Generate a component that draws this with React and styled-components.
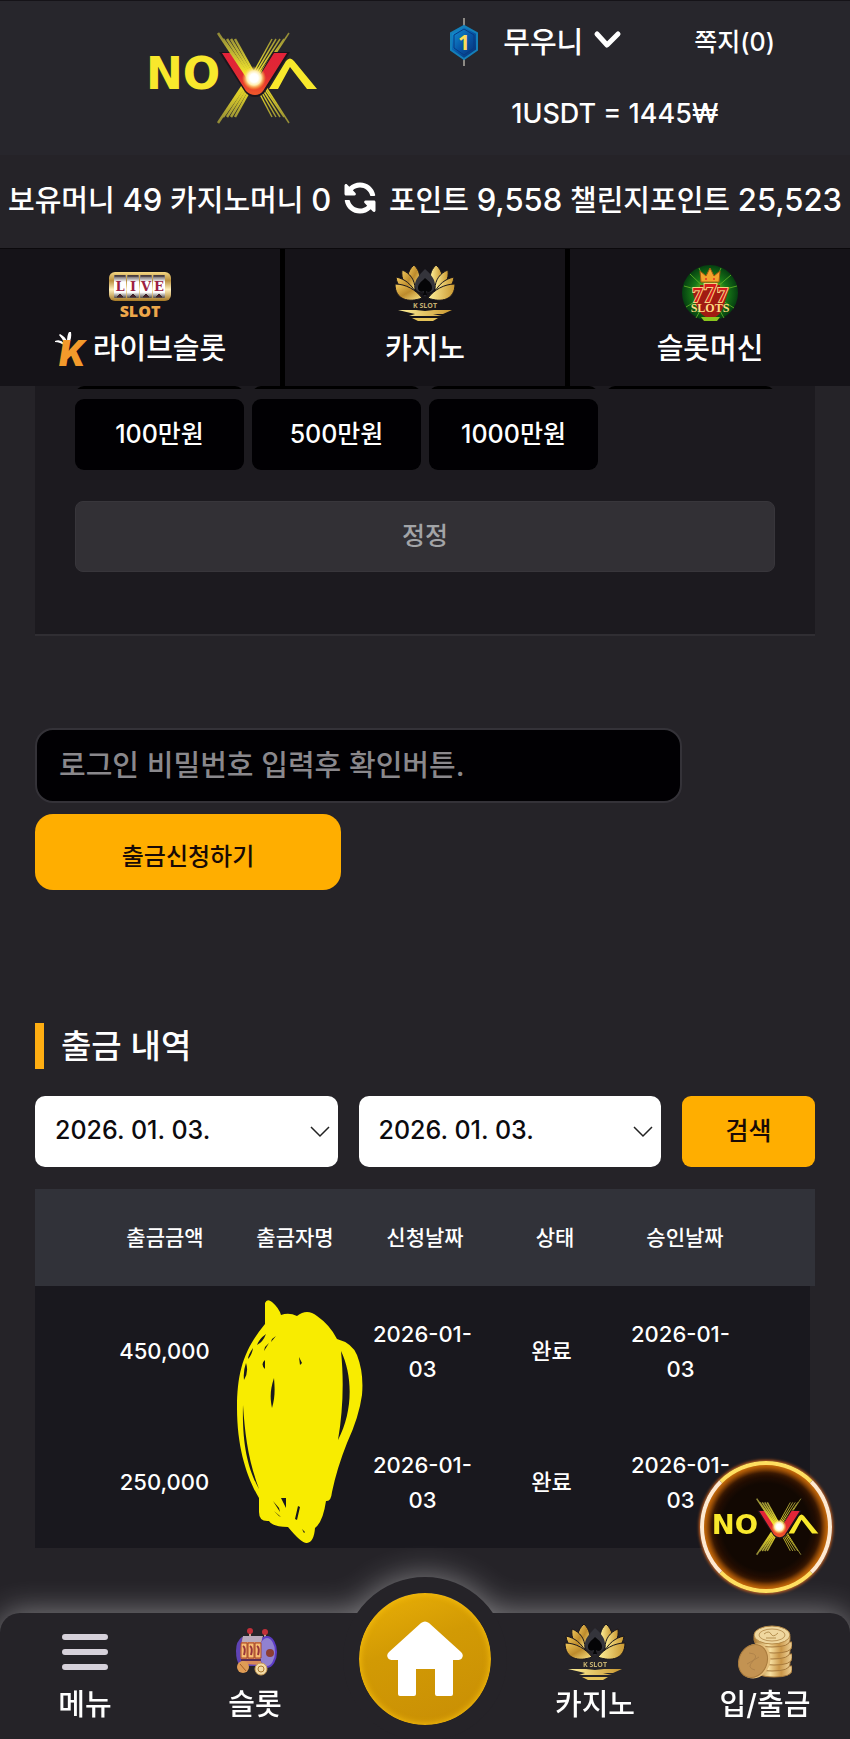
import React from 'react';
import styled, { createGlobalStyle } from 'styled-components';
import { FaSyncAlt } from 'react-icons/fa';

const GlobalStyle = createGlobalStyle`
  * { box-sizing: border-box; }
  body {
    margin: 0;
    background: #252328;
    color: #fff;
    font-family: Inter, "Noto Sans CJK KR", sans-serif;
    font-weight: 500;
  }
  button, input, select { font: inherit; }
  a { color: inherit; text-decoration: none; }
`;

const amounts = ['100만원', '500만원', '1000만원'];
const columns = ['출금금액', '출금자명', '신청날짜', '상태', '승인날짜'];
const withdrawals = [
  { amount: '450,000', status: '완료' },
  { amount: '250,000', status: '완료' },
];

const rays = [0, 5, 9, 13, 17];

const NovaLogo = ({ width }) => (
  <svg width={width} viewBox="0 0 170 92" role="img" aria-label="NOVA">
    <defs>
      <linearGradient id="novaRay" x1="0" y1="0" x2="0" y2="92" gradientUnits="userSpaceOnUse">
        <stop offset="0" stopColor="#8d8638" />
        <stop offset="0.45" stopColor="#f3e62c" />
        <stop offset="0.7" stopColor="#d8ca2a" />
        <stop offset="1" stopColor="#8d8638" />
      </linearGradient>
      <linearGradient id="novaRed" x1="0" y1="18" x2="0" y2="62" gradientUnits="userSpaceOnUse">
        <stop offset="0" stopColor="#e3213a" />
        <stop offset="0.6" stopColor="#e02a32" />
        <stop offset="1" stopColor="#f0562a" />
      </linearGradient>
      <radialGradient id="novaStar">
        <stop offset="0.35" stopColor="#fff" />
        <stop offset="0.6" stopColor="#ffeeb0" />
        <stop offset="1" stopColor="#ffd21f" stopOpacity="0" />
      </radialGradient>
    </defs>
    <text x="-2" y="57" fontFamily="DejaVu Sans" fontWeight="700" fontSize="44" fill="#f8e82c">NO</text>
    <path d="M121 57 138 29q4-5 8 0l23 28h-10L142 35 130 57z" fill="#f8e82c" />
    <g stroke="url(#novaRay)">
      {rays.map((r) => (
        <g key={r}>
          <path d={`M${141 - r} ${r ? 7 : 1}L${110 - r / 2} 48`} strokeWidth="1.5" />
          <path d={`M${141 - r} ${r ? 85 : 91}L${112 - r / 2} 46`} strokeWidth="1.5" />
          <path d={`M${70 + r} ${r ? 85 : 91}L${100 + r / 2} 46`} strokeWidth="2.5" />
        </g>
      ))}
    </g>
    <path d="M71 20h16l19 32 19-32h17l-25 40q-4 5-10 5t-10-5z" fill="#1c151c" />
    <path d="M74 21h12l20 32 20-32h13l-24 38q-3 4-8 4t-9-4z" fill="url(#novaRed)" />
    <g stroke="url(#novaRay)" strokeWidth="2.5">
      {rays.map((r) => (
        <path key={r} d={`M${70 + r} ${r ? 7 : 1}L${100 + r / 2} 46`} />
      ))}
    </g>
    <circle cx="106" cy="46" r="12" fill="url(#novaStar)" />
  </svg>
);

const LevelIcon = () => (
  <svg width="30" height="48" viewBox="0 0 30 48">
    <defs>
      <linearGradient id="lvl" x1="0" y1="0" x2="1" y2="1">
        <stop offset="0" stopColor="#169ddc" />
        <stop offset="0.5" stopColor="#0757a8" />
        <stop offset="1" stopColor="#082a6c" />
      </linearGradient>
    </defs>
    <path d="M15 0v8M15 40v8" stroke="#8d8a85" strokeWidth="2" />
    <path d="M15 8 28 15v17l-13 9L2 32V15z" fill="url(#lvl)" stroke="#147fb9" strokeWidth="2" />
    <path d="M15 11 25 17v13l-10 7-10-7V17z" fill="none" stroke="#063a84" strokeWidth="1" />
    <text x="15" y="32" textAnchor="middle" fontFamily="Open Sans" fontWeight="700" fontSize="21" fill="#fbdc58">1</text>
  </svg>
);

const ChevronIcon = () => (
  <svg width="29" height="22" viewBox="0 0 29 22">
    <path d="M4 5l10 11L25 5" fill="none" stroke="#fff" strokeWidth="5" strokeLinecap="round" strokeLinejoin="round" />
  </svg>
);

const LiveSlotIcon = () => (
  <svg width="64" height="58" viewBox="0 0 64 58">
    <defs>
      <linearGradient id="frame" x1="0" y1="0" x2="0" y2="1">
        <stop offset="0" stopColor="#f5d783" />
        <stop offset="0.3" stopColor="#b9903f" />
        <stop offset="0.6" stopColor="#fff0bc" />
        <stop offset="1" stopColor="#a67824" />
      </linearGradient>
      <linearGradient id="reel" x1="0" y1="0" x2="0" y2="1">
        <stop offset="0" stopColor="#4b4344" />
        <stop offset="0.3" stopColor="#fff" />
        <stop offset="0.75" stopColor="#fff" />
        <stop offset="1" stopColor="#514a48" />
      </linearGradient>
    </defs>
    <rect x="1" y="8" width="62" height="29" rx="6" fill="url(#frame)" />
    {[6, 19, 32, 45].map((x, i) => (
      <g key={x}>
        <rect x={x} y="11" width="12" height="23" rx="1" fill="url(#reel)" />
        <path d={`M${x + 1} 12h10M${x + 3} 33l3-3 3 3z`} stroke="#38282b" strokeWidth="1" fill="#51202e" />
        <text x={x + 6} y="27" textAnchor="middle" fontFamily="DejaVu Serif" fontWeight="700" fontSize="13" fill="#9c2142">{'LIVE'[i]}</text>
      </g>
    ))}
    <text x="32" y="53" textAnchor="middle" fontFamily="Open Sans" fontWeight="800" fontSize="16" fill="#eda74a">SLOT</text>
  </svg>
);

const LotusIcon = () => (
  <svg width="62" height="58" viewBox="0 0 62 58">
    <defs>
      <linearGradient id="goldL" x1="0" y1="0" x2="1" y2="1">
        <stop offset="0" stopColor="#f2c95c" />
        <stop offset="0.5" stopColor="#bd8b2c" />
        <stop offset="1" stopColor="#ffe98a" />
      </linearGradient>
      <linearGradient id="goldR" x1="0" y1="0" x2="1" y2="0">
        <stop offset="0" stopColor="#fff19a" />
        <stop offset="1" stopColor="#c8962f" />
      </linearGradient>
    </defs>
    <g fill="url(#goldL)" stroke="#17141a" strokeWidth="1">
      <path d="M20 1c-7 6-8 14-3 24l7-5c3-7 2-13-4-19z" />
      <path d="M8 6c-1 9 2 15 11 22l2-3C21 16 16 9 8 6z" />
      <path d="M2 13c1 9 6 14 19 20l1-4C17 20 11 15 2 13z" />
      <path d="M1 20c0 16 14 19 27 14C22 26 12 20 1 20z" />
    </g>
    <g fill="url(#goldR)" stroke="#17141a" strokeWidth="1">
      <path d="M42 1c7 6 8 14 3 24l-7-5c-3-7-2-13 4-19z" />
      <path d="M54 6c1 9-2 15-11 22l-2-3c0-9 5-16 13-19z" />
      <path d="M60 13c-1 9-6 14-19 20l-1-4c5-9 11-14 20-16z" />
      <path d="M61 20c0 16-14 19-27 14 6-8 16-14 27-14z" />
    </g>
    <path d="M31 5c7 6 10 11 10 16 0 6-4 8-8 7l-2 5-2-5c-5 1-8-2-8-7 0-5 4-10 10-16z" fill="#34343b" />
    <path d="M31 14c5 4 7 6 7 10s-4 5-6 3l1 4h-4l1-4c-3 2-6 0-6-3 0-4 3-6 7-10z" fill="#050507" />
    <text x="31" y="44" textAnchor="middle" fontFamily="Open Sans" fontWeight="700" fontSize="7" fill="#c5b071">K SLOT</text>
    <path d="M4 46h18l9 1 9-1h18l-9 4H39l9 2H15l6-2z" fill="url(#goldR)" />
    <path d="M18 54h26l-5 3H24z" fill="#e4c259" />
  </svg>
);

const SlotsIcon = () => (
  <svg width="58" height="58" viewBox="0 0 58 58">
    <defs>
      <radialGradient id="green">
        <stop offset="0.2" stopColor="#88c51c" />
        <stop offset="0.6" stopColor="#187a17" />
        <stop offset="1" stopColor="#053f10" />
      </radialGradient>
    </defs>
    <circle cx="29" cy="29" r="28" fill="url(#green)" />
    <g stroke="#67b928" strokeWidth="1" opacity="0.8">
      <path d="M29 29 9 10M29 29 3 22M29 29 50 11M29 29 56 22M29 29 5 43M29 29 53 44M29 29 15 54M29 29 43 54M29 29 18 4M29 29 40 4" />
    </g>
    <path d="M20 18 19 7l6 5 4-8 4 8 6-5-1 11z" fill="#f3a32b" stroke="#a95810" />
    <circle cx="25" cy="15" r="1" fill="#e93124" />
    <circle cx="33" cy="15" r="1" fill="#e93124" />
    <path d="M11 24h8v-3h20v3h9l-4 14q-5 17-15 16T14 38z" fill="#a11b12" />
    <text x="29" y="38" textAnchor="middle" fontFamily="Liberation Serif" fontWeight="700" fontSize="22" fill="#d51a1c" stroke="#f6d27e" strokeWidth="2" paintOrder="stroke">
      7<tspan fontSize="28">7</tspan>7
    </text>
    <text x="29" y="48" textAnchor="middle" fontFamily="Liberation Serif" fontWeight="700" fontSize="12" fill="#ffdb83">SLOTS</text>
    <path d="M20 53h19l-3 4H23z" fill="#8ac51d" />
  </svg>
);

const CrownKIcon = () => (
  <svg width="36" height="38" viewBox="0 0 36 38">
    <path d="M1 11q5-2 9 2-2-5-5-8l1-1q6 3 7 8 0-7 2-10l2 0q1 6-2 11-2 2-4 3-5-4-10-4z" fill="#fff" />
    <text x="5" y="36" fontFamily="Inter" fontStyle="italic" fontWeight="900" fontSize="35" fill="#f39a2b">K</text>
  </svg>
);

const MenuIcon = () => (
  <svg width="46" height="38" viewBox="0 0 46 38">
    <path d="M3 4h40M3 19h40M3 34h40" stroke="#d6d1da" strokeWidth="6" strokeLinecap="round" />
  </svg>
);

const MachineIcon = () => (
  <svg width="44" height="50" viewBox="0 0 44 50">
    <path d="M17 6v8M32 7v8" stroke="#caa08a" strokeWidth="2" />
    <circle cx="17" cy="4" r="3" fill="#c2303a" />
    <circle cx="32" cy="5" r="3" fill="#c2303a" />
    <path d="M9 10q-6 4-6 14t4 15h26V11z" fill="#5f43b4" />
    <ellipse cx="34" cy="25" rx="9" ry="15" fill="#9181d0" stroke="#5b3bc5" strokeWidth="2" />
    <path d="M10 10q-5 14-1 27l20 1q-5-12 0-26z" fill="#d98a58" />
    <path d="M10 9h20l-2 6H9z" fill="#b9aabb" />
    <path d="M8 16h6v15H8zM15 16h6v15h-6zM22 16h6v15h-6z" fill="#f8bd72" stroke="#a6462b" />
    <path d="M10 19q3 2 1 9M17 19q3 2 1 9M24 19q3 2 1 9" fill="none" stroke="#97353a" strokeWidth="2" />
    <path d="M8 33h20" stroke="#5a2c55" strokeWidth="2" />
    <circle cx="37" cy="26" r="4" fill="#8c3d34" />
    <circle cx="10" cy="40" r="6" fill="#df9c55" />
    <path d="M7 37l6 7" stroke="#a45e27" />
    <circle cx="28" cy="42" r="6" fill="#f3dba6" stroke="#c79a57" />
    <circle cx="28" cy="42" r="3" fill="none" stroke="#a9772f" />
  </svg>
);

const CoinsIcon = () => (
  <svg width="54" height="56" viewBox="0 0 54 56">
    <defs>
      <linearGradient id="coin" x1="0" y1="0" x2="1" y2="0">
        <stop offset="0" stopColor="#a97a35" />
        <stop offset="0.4" stopColor="#f7dfa0" />
        <stop offset="0.7" stopColor="#c99547" />
        <stop offset="1" stopColor="#edd096" />
      </linearGradient>
    </defs>
    {[46, 40, 34, 28, 22, 16].map((y, i) => (
      <path key={y} d={`M${i % 2 ? 16 : 18} ${y - 4}v4q0 7 18 7t18-7v-4z`} fill="url(#coin)" stroke="#a87a3c" strokeWidth="1" />
    ))}
    <ellipse cx="34" cy="11" rx="18" ry="9" fill="#efd79f" stroke="#b58a48" />
    <ellipse cx="34" cy="11" rx="13" ry="6" fill="none" stroke="#bd9658" />
    <path d="M26 10q5-4 7 0t7-1M28 14h10" fill="none" stroke="#b58f50" strokeWidth="1" />
    <ellipse cx="17" cy="37" rx="15" ry="18" transform="rotate(24 17 37)" fill="#e4bc78" />
    <ellipse cx="15" cy="37" rx="14" ry="17" transform="rotate(24 15 37)" fill="#c39352" stroke="#a87a3c" />
    <path d="M11 29q11 1 4 8t2 9M9 40l12-7" fill="none" stroke="#b0834a" strokeWidth="1" />
  </svg>
);

const HomeIcon = () => (
  <svg width="76" height="76" viewBox="0 0 76 76">
    <path d="M34 2q4-3 8 0l32 29q3 3 1 6-1 2-5 2h-4v34q0 2-2 2H50q-2 0-2-2V48H29v25q0 2-2 2H13q-2 0-2-2V39H6q-4 0-5-2-2-3 1-6z" fill="#fff" />
  </svg>
);

const Scribble = () => (
  <ScribbleSvg width="126" height="244" viewBox="0 0 126 244" aria-hidden="true">
    <path
      fill="#f8ec00"
      fillRule="evenodd"
      d="M28 3q2-5 7-1 7 6 9 13 8-3 16 1 10-8 20 0 13 9 20 23 15 4 20 16 7 18 5 40-3 22-15 48-10 25-15 49-1 10-6 9-3 21-11 27-1 14-8 15-5 1-19-16-15 0-19-6-10 1-10-9v-14C10 178 0 148 0 108c0-38 8-60 28-84V3zM104 51c3 30 2 60-3 89 15-28 15-64 3-89zM6 105c-1 40 5 64 16 84-11-30-14-54-16-84zM37 78c-4 12-4 20-2 30 3-10 3-18 2-30zM29 34q-7 5-9 11 6-3 9-11zM16 48q-5 7-5 11 4-4 5-11zM9 63q-3 8-2 17 5-8 2-17zM28 60q-5 4 0 9zM39 36l-5 6 1-3zM32 43l-5 8 1-4zM44 198h5v10zM61 206l-3 13 2 1 3-13zM36 201l7 11-1-4zM37 211l7 6-2-1zM62 57l3 6-2 2zM65 229l3 3-1 1z"
    />
  </ScribbleSvg>
);

const DateField = ({ label }) => (
  <DateWrap>
    <select aria-label={label}>
      <option>2026. 01. 03.</option>
    </select>
    <svg width="20" height="12" viewBox="0 0 20 12">
      <path d="M1 1l9 9 9-9" fill="none" stroke="#222" strokeWidth="1.5" />
    </svg>
  </DateWrap>
);

const App = () => (
  <Page>
    <GlobalStyle />
    <StickyTop>
      <Header>
        <LogoLink href="#home"><NovaLogo width="170" /></LogoLink>
        <Account>
          <UserRow>
            <LevelIcon />
            <UserButton type="button">무우니 <ChevronIcon /></UserButton>
            <MessageLink href="#messages">쪽지(0)</MessageLink>
          </UserRow>
          <Rate>1USDT = 1445₩</Rate>
        </Account>
      </Header>
      <Balances>
        <span>보유머니 <Figure>49</Figure> 카지노머니 <Figure>0</Figure></span>
        <RefreshButton type="button" aria-label="새로고침"><FaSyncAlt size={32} /></RefreshButton>
        <span>포인트 <Figure>9,558</Figure> 챌린지포인트 <Figure>25,523</Figure></span>
      </Balances>
      <Tabs>
        <Tab href="#live">
          <TabIcon><LiveSlotIcon /></TabIcon>
          <TabLabel><CrownKIcon />라이브슬롯</TabLabel>
        </Tab>
        <Tab href="#casino">
          <TabIcon><LotusIcon /></TabIcon>
          <TabLabel>카지노</TabLabel>
        </Tab>
        <Tab href="#slots">
          <TabIcon><SlotsIcon /></TabIcon>
          <TabLabel>슬롯머신</TabLabel>
        </Tab>
      </Tabs>
    </StickyTop>

    <Main>
      <Panel>
        <AmountEdge>
          <i /><i /><i /><i />
        </AmountEdge>
        <AmountGrid>
          {amounts.map((a) => <AmountButton type="button" key={a}>{a}</AmountButton>)}
        </AmountGrid>
        <ResetButton type="button">정정</ResetButton>
      </Panel>

      <Form onSubmit={(e) => e.preventDefault()}>
        <PasswordInput type="password" aria-label="로그인 비밀번호" placeholder="로그인 비밀번호 입력후 확인버튼." />
        <SubmitButton>출금신청하기</SubmitButton>
      </Form>

      <Title>출금 내역</Title>
      <Filters>
        <DateField label="시작 날짜" />
        <DateField label="종료 날짜" />
        <SearchButton type="button">검색</SearchButton>
      </Filters>

      <Table>
        <thead>
          <tr>{columns.map((c) => <th key={c}>{c}</th>)}</tr>
        </thead>
        <tbody>
          {withdrawals.map((w, i) => (
            <tr key={w.amount}>
              <td>{w.amount}</td>
              <td>{i === 0 && <Scribble />}</td>
              <td>2026-01-<wbr />03</td>
              <td>{w.status}</td>
              <td>2026-01-<wbr />03</td>
            </tr>
          ))}
        </tbody>
      </Table>
    </Main>

    <FloatingButton href="#nova"><NovaLogo width="106" /></FloatingButton>

    <BottomNav>
      <NavItem href="#menu">
        <NavIcon><MenuIcon /></NavIcon>
        메뉴
      </NavItem>
      <NavItem href="#slot">
        <NavIcon><MachineIcon /></NavIcon>
        슬롯
      </NavItem>
      <HomeSlot>
        <HomeButton href="#home" aria-label="홈"><HomeIcon /></HomeButton>
      </HomeSlot>
      <NavItem href="#casino">
        <NavIcon><LotusIcon /></NavIcon>
        카지노
      </NavItem>
      <NavItem href="#cash">
        <NavIcon><CoinsIcon /></NavIcon>
        입/출금
      </NavItem>
    </BottomNav>
  </Page>
);

const Page = styled.div`
  display: flex;
  flex-direction: column;
  min-height: 100vh;
`;

const StickyTop = styled.div`
  position: sticky;
  top: 0;
  z-index: 2;
`;

const Header = styled.header`
  display: grid;
  grid-template-columns: 11fr 10fr;
  min-height: 155px;
  background: #27262c;
  border-top: 1px solid #151318;
`;

const LogoLink = styled.a`
  display: flex;
  align-items: center;
  justify-content: center;
  padding-left: 20px;

  svg {
    overflow: visible;
  }
`;

const Account = styled.div`
  display: flex;
  flex-direction: column;
  gap: 28px;
  padding: 17px 0 0 4px;
`;

const UserRow = styled.div`
  display: flex;
  align-items: center;
  height: 48px;
`;

const UserButton = styled.button`
  display: flex;
  align-items: center;
  gap: 10px;
  margin-left: 24px;
  padding: 0 0 5px;
  border: 0;
  background: none;
  color: #fff;
  font-size: 29px;
  white-space: nowrap;
`;

const MessageLink = styled.a`
  margin-left: 72px;
  padding-bottom: 5px;
  font-size: 25px;
  white-space: nowrap;
`;

const Rate = styled.div`
  padding-left: 62px;
  font-size: 27px;
  line-height: 40px;
`;

const Balances = styled.div`
  display: flex;
  align-items: center;
  justify-content: space-between;
  min-height: 94px;
  padding: 0 8px 8px;
  background: #252328;
  border-bottom: 1px solid #0b090c;
  font-size: 29px;
  white-space: nowrap;
`;

const Figure = styled.span`
  font-size: 31px;
`;

const RefreshButton = styled.button`
  display: flex;
  padding: 0;
  border: 0;
  background: none;
  color: #fff;

  svg {
    transform: scaleX(-1);
  }
`;

const Tabs = styled.nav`
  display: grid;
  grid-template-columns: repeat(3, 1fr);
  gap: 5px;
  background: #000;
`;

const Tab = styled.a`
  display: flex;
  flex-direction: column;
  align-items: center;
  gap: 6px;
  padding: 15px 0 16px;
  background: #151318;
`;

const TabIcon = styled.span`
  display: flex;
  align-items: center;
  height: 58px;
`;

const TabLabel = styled.span`
  display: flex;
  align-items: center;
  gap: 3px;
  font-size: 29px;
  line-height: 42px;
`;

const Main = styled.main`
  flex: 1;
  padding: 0 35px 65px;
`;

const Panel = styled.section`
  padding: 0 40px 62px;
  background: #1c1a1f;
  border-bottom: 2px solid #302e33;
`;

const AmountEdge = styled.div`
  display: grid;
  grid-template-columns: repeat(4, 1fr);
  gap: 8px;
  align-items: end;
  height: 3px;
  overflow: hidden;

  i {
    height: 72px;
    border-radius: 9px;
    background: #000;
  }
`;

const AmountGrid = styled.div`
  display: grid;
  grid-template-columns: repeat(4, 1fr);
  gap: 8px;
  margin: 10px 0 31px;
`;

const AmountButton = styled.button`
  height: 71px;
  padding: 0 0 5px;
  border: 0;
  border-radius: 9px;
  background: #010003;
  color: #fff;
  font-size: 25px;
`;

const ResetButton = styled.button`
  width: 100%;
  height: 71px;
  padding: 0 0 5px;
  border: 1px solid #38363b;
  border-radius: 8px;
  background: #323035;
  color: #a2a4a7;
  font-size: 25px;
`;

const Form = styled.form`
  display: flex;
  flex-direction: column;
  gap: 11px;
  margin: 92px 0 133px;
`;

const PasswordInput = styled.input`
  width: 83%;
  height: 75px;
  padding: 0 22px;
  border: 2px solid #343238;
  border-radius: 18px;
  background: #010003;
  color: #fff;
  font-size: 29px;

  &::placeholder {
    color: #8a888c;
    opacity: 1;
  }
`;

const SubmitButton = styled.button`
  width: 306px;
  height: 76px;
  padding: 5px 0 0;
  border: 0;
  border-radius: 18px;
  background: #ffae00;
  color: #180a06;
  font-size: 24px;
`;

const Title = styled.h2`
  margin: 0 0 27px;
  padding-left: 17px;
  border-left: 9px solid #ffae12;
  font-size: 33px;
  font-weight: 500;
  line-height: 46px;
`;

const Filters = styled.div`
  display: grid;
  grid-template-columns: 1fr 1fr 133px;
  gap: 21px;
  margin-bottom: 22px;
`;

const DateWrap = styled.div`
  position: relative;

  select {
    width: 100%;
    height: 71px;
    padding: 0 20px 3px;
    border: 0;
    border-radius: 10px;
    background: #fff;
    color: #0c0a0e;
    font-size: 25px;
    appearance: none;
  }

  svg {
    position: absolute;
    right: 8px;
    top: 30px;
    pointer-events: none;
  }
`;

const SearchButton = styled.button`
  padding: 0 0 5px;
  border: 0;
  border-radius: 9px;
  background: #ffae00;
  color: #180a06;
  font-size: 25px;
`;

const Table = styled.table`
  display: block;
  text-align: center;

  thead,
  tbody {
    display: block;
    padding: 0 65px;
  }

  thead {
    background: #313239;
    font-size: 21px;
  }

  tbody {
    margin-right: 5px;
    background: #19181e;
    font-size: 22px;
  }

  tr {
    display: grid;
    grid-template-columns: repeat(5, 1fr);
  }

  th {
    padding: 0;
    font-weight: 500;
    line-height: 97px;
  }

  td {
    position: relative;
    display: block;
    align-content: center;
    min-height: 131px;
    padding: 0 12px;
    line-height: 35px;
  }
`;

const ScribbleSvg = styled.svg`
  position: absolute;
  top: 14px;
  left: 8px;
  z-index: 1;
`;

const FloatingButton = styled.a`
  position: fixed;
  right: 18px;
  bottom: 146px;
  z-index: 4;
  display: flex;
  align-items: center;
  justify-content: center;
  width: 132px;
  height: 132px;
  border: 4px solid;
  border-color: #ffdf60 #ffe9d0;
  border-radius: 50%;
  background: radial-gradient(circle, #120802 50%, #2b1002 62%, #9c4a04 71%);
  box-shadow: 0 0 3px 1px #d0621c, inset 0 0 8px 2px #d9780c;
`;

const BottomNav = styled.nav`
  position: sticky;
  bottom: 0;
  z-index: 3;
  display: grid;
  grid-template-columns: repeat(5, 1fr);
  border-radius: 20px 20px 0 0;
  background: #252328;
  filter: drop-shadow(0 0 16px rgba(255, 255, 255, 0.45));
`;

const NavItem = styled.a`
  display: flex;
  flex-direction: column;
  align-items: center;
  gap: 4px;
  padding: 11px 0 14px;
  font-size: 29px;
  line-height: 42px;
`;

const NavIcon = styled.span`
  display: flex;
  align-items: center;
  height: 56px;
`;

const HomeSlot = styled.div`
  position: relative;
`;

/* the dark ring rises above the bar and shares its glow */
const HomeButton = styled.a`
  position: absolute;
  top: -36px;
  left: 50%;
  display: flex;
  align-items: center;
  justify-content: center;
  width: 164px;
  height: 164px;
  margin-left: -82px;
  border: 16px solid #252328;
  border-radius: 50%;
  background: linear-gradient(160deg, #eab007, #d29a04 40%, #c88e05) padding-box;
  box-shadow: inset 0 0 6px 1px #f5bd0c;
`;

export default App;
